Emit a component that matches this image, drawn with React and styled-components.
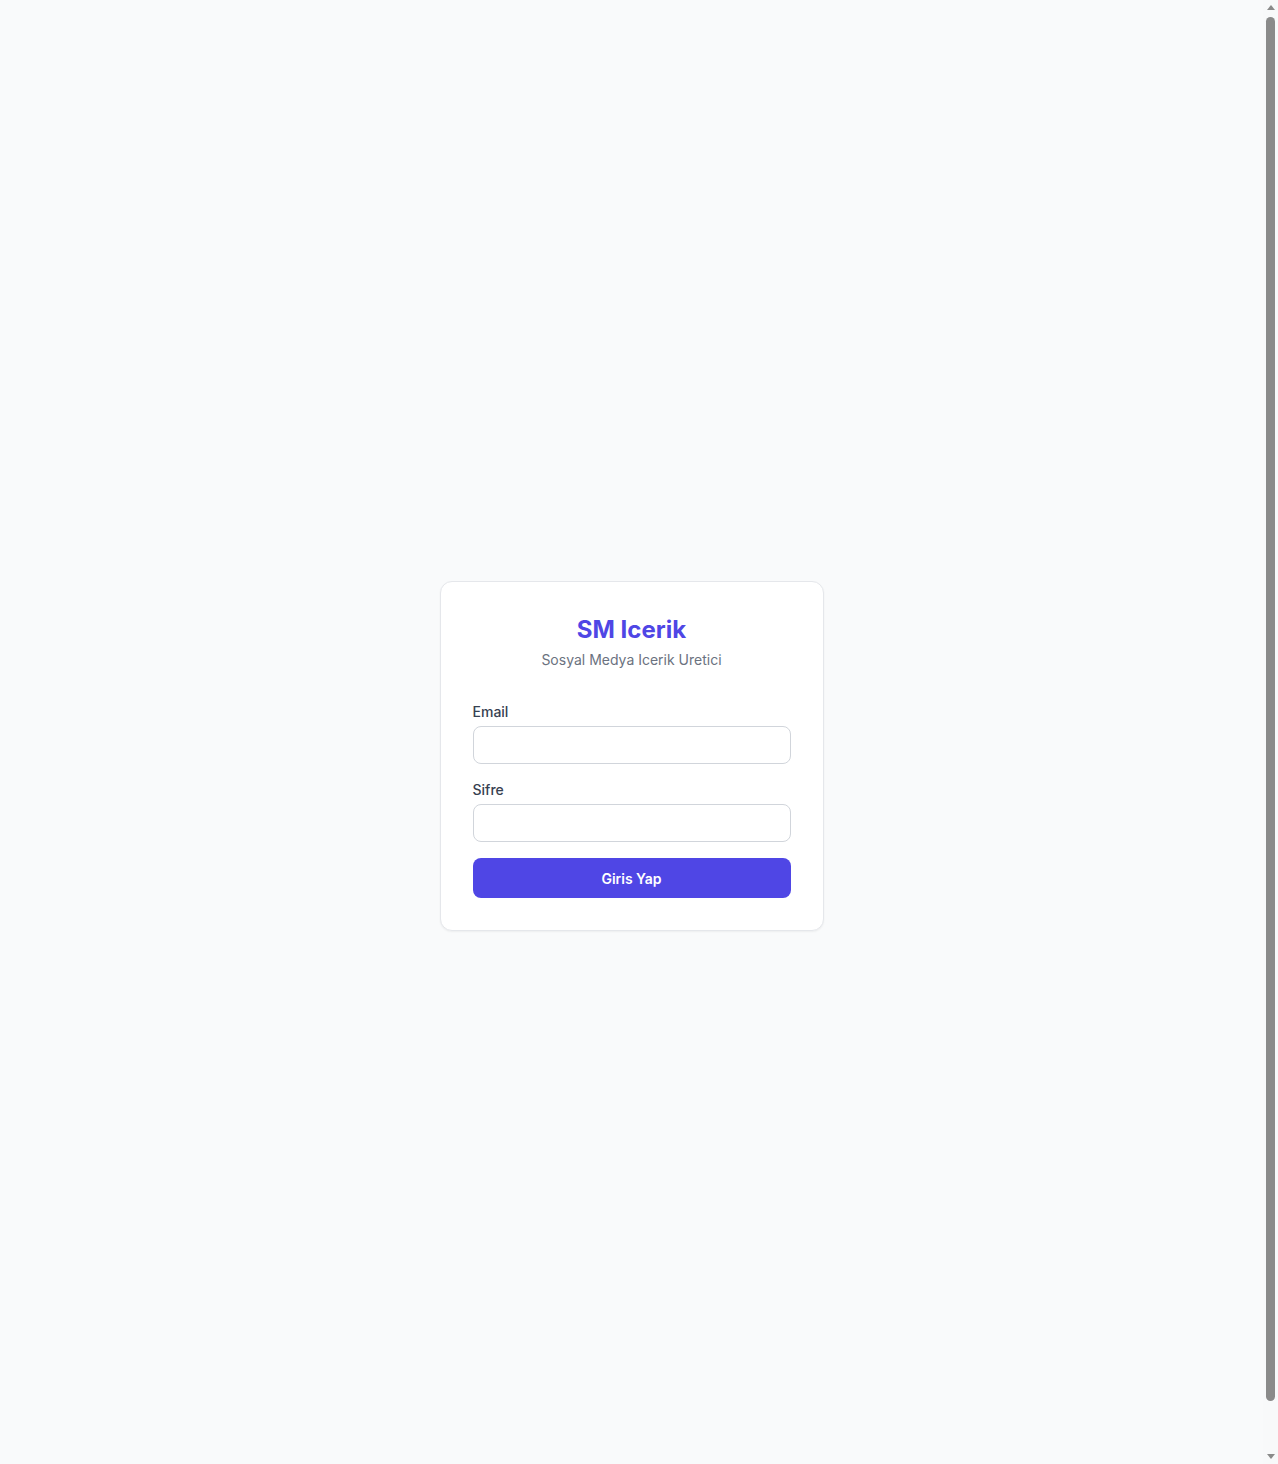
import React from "react";
import styled, { createGlobalStyle } from "styled-components";

const GlobalStyle = createGlobalStyle`
  html, body {
    margin: 0;
    padding: 0;
    background: #f9fafb;
    font-family: Inter, "Noto Sans", "Liberation Sans", sans-serif;
    -webkit-font-smoothing: antialiased;
  }
  *, *::before, *::after { box-sizing: border-box; }
`;

const Shell = styled.div`
  padding-right: 15px;
`;

const Page = styled.div`
  box-sizing: content-box;
  min-height: 100vh;
  padding: 24px;
  display: flex;
  align-items: center;
  justify-content: center;
  background: #f9fafb;
`;

const ScrollRail = styled.div`
  position: fixed;
  top: 0;
  right: 0;
  width: 15px;
  height: 100vh;
  background: #f8f9fa;
  display: flex;
  flex-direction: column;
  align-items: center;
`;

const Arrow = styled.div`
  width: 0;
  height: 0;
  margin: ${(p) => (p.$down ? "auto 0 5px" : "5px 0 0")};
  border-left: 4px solid transparent;
  border-right: 4px solid transparent;
  ${(p) =>
    p.$down
      ? "border-top: 5px solid #8a8a8a;"
      : "border-bottom: 5px solid #8a8a8a;"}
`;

const Thumb = styled.div`
  width: 9px;
  height: 1384px;
  margin-top: 7px;
  border-radius: 5px;
  background: #8a8a8a;
`;

const Card = styled.div`
  width: 384px;
  background: #ffffff;
  border: 1px solid #e5e7eb;
  border-radius: 12px;
  box-shadow: 0 1px 2px rgba(0, 0, 0, 0.05);
  padding: 32px;
`;

const Header = styled.div`
  text-align: center;
  margin-bottom: 32px;
`;

const Title = styled.h1`
  margin: 0;
  font-size: 24px;
  line-height: 32px;
  font-weight: 700;
  color: #4f46e5;
`;

const Subtitle = styled.p`
  margin: 4px 0 0;
  font-size: 14px;
  line-height: 20px;
  color: #6b7280;
`;

const Form = styled.form`
  display: flex;
  flex-direction: column;
  gap: 16px;
`;

const Field = styled.div`
  display: flex;
  flex-direction: column;
  gap: 4px;
`;

const Label = styled.label`
  font-size: 14px;
  line-height: 20px;
  font-weight: 500;
  color: #374151;
`;

const Input = styled.input`
  width: 100%;
  height: 38px;
  padding: 8px 12px;
  font-size: 14px;
  line-height: 20px;
  font-family: inherit;
  border: 1px solid #d1d5db;
  border-radius: 8px;
  background: #fff;
  outline: none;
`;

const Button = styled.button`
  width: 100%;
  height: 40px;
  border: none;
  border-radius: 8px;
  background: #4f46e5;
  color: #ffffff;
  font-family: inherit;
  font-size: 14px;
  font-weight: 600;
  cursor: pointer;
`;

export default function App() {
  return (
    <>
      <GlobalStyle />
      <Shell>
        <Page>
          <Card>
            <Header>
              <Title>SM Icerik</Title>
              <Subtitle>Sosyal Medya Icerik Uretici</Subtitle>
            </Header>
            <Form onSubmit={(e) => e.preventDefault()}>
              <Field>
                <Label htmlFor="email">Email</Label>
                <Input id="email" type="email" />
              </Field>
              <Field>
                <Label htmlFor="password">Sifre</Label>
                <Input id="password" type="password" />
              </Field>
              <Button type="submit">Giris Yap</Button>
            </Form>
          </Card>
        </Page>
      </Shell>
      <ScrollRail aria-hidden="true">
        <Arrow />
        <Thumb />
        <Arrow $down />
      </ScrollRail>
    </>
  );
}
